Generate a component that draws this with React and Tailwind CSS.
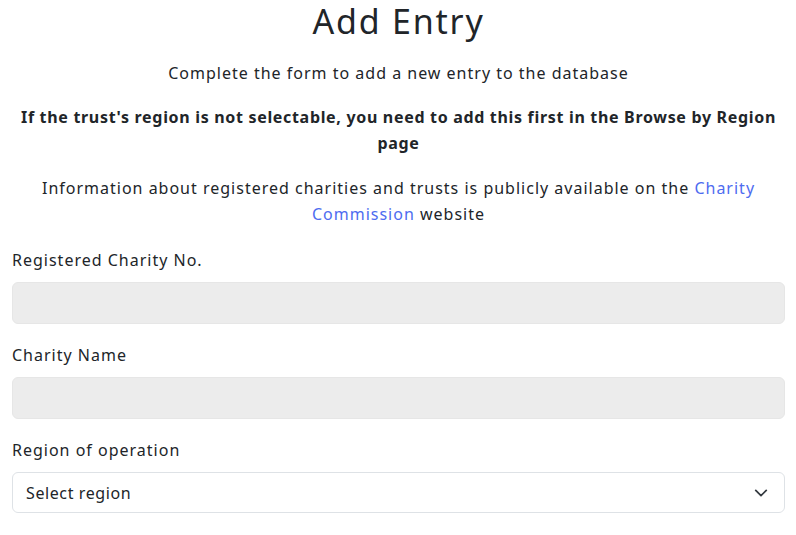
export default function App() {
  const font = { fontFamily: '"Noto Sans", "Open Sans", sans-serif' };
  return (
    <div className="bg-white text-[#212529] pl-3 pr-[11px] tracking-[1px]" style={font}>
      <h1 className="text-center text-[34px] leading-[42px] mb-[18px] font-normal tracking-[1.8px]">Add Entry</h1>
      <p className="text-center text-[16px] leading-[26px] mb-[18px]">Complete the form to add a new entry to the database</p>
      <p className="text-center text-[16px] leading-[26px] font-bold mb-[19px] tracking-[0.68px]">If the trust's region is not selectable, you need to add this first in the Browse by Region page</p>
      <p className="text-center text-[16px] leading-[26px] mb-[20px]">Information about registered charities and trusts is publicly available on the <a className="text-[#4e6cf0]">Charity Commission</a> website</p>
      <div className="flex flex-col">
        <label className="text-[16px] leading-[26px] mb-[9px]">Registered Charity No.</label>
        <div className="h-[42px] rounded-[6px] bg-[#ececec] border border-[#e6e6e6] mb-[18px]"></div>
        <label className="text-[16px] leading-[26px] mb-[9px]">Charity Name</label>
        <div className="h-[42px] rounded-[6px] bg-[#ececec] border border-[#e6e6e6] mb-[18px]"></div>
        <label className="text-[16px] leading-[26px] mb-[9px]">Region of operation</label>
        <div className="h-[41px] rounded-[6px] bg-white border border-[#dee2e6] flex items-center justify-between pl-[13px] pr-[16px]">
          <span className="text-[16px] tracking-[0.6px]">Select region</span>
          <svg width="14" height="14" viewBox="0 0 16 16" fill="none" stroke="#343a40" strokeWidth="2" strokeLinecap="round" strokeLinejoin="round"><path d="M2 5l6 6 6-6" /></svg>
        </div>
      </div>
    </div>
  );
}
